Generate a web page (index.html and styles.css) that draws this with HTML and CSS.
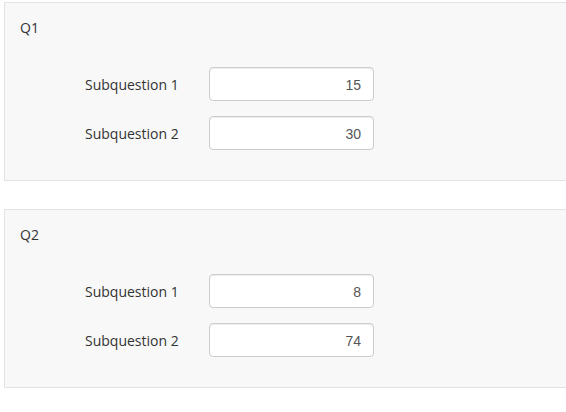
FILE: index.html
```html
<!DOCTYPE html>
<html>
<head>
<meta charset="utf-8">
<link rel="stylesheet" href="styles.css">
</head>
<body>
<div class="page">
  <section class="panel">
    <div class="title">Q1</div>
    <div class="rows">
      <div class="row"><span class="label">Subquestion 1</span><input class="field" type="text" value="15"></div>
      <div class="row"><span class="label">Subquestion 2</span><input class="field" type="text" value="30"></div>
    </div>
  </section>
  <section class="panel">
    <div class="title">Q2</div>
    <div class="rows">
      <div class="row"><span class="label">Subquestion 1</span><input class="field" type="text" value="8"></div>
      <div class="row"><span class="label">Subquestion 2</span><input class="field" type="text" value="74"></div>
    </div>
  </section>
</div>
</body>
</html>
```
FILE: styles.css
```css
html, body {
  margin: 0;
  padding: 0;
  background: #ffffff;
  overflow: hidden;
}
.page {
  padding: 2px 0 0 4px;
  display: flex;
  flex-direction: column;
  gap: 28px;
  font-family: "Open Sans", sans-serif;
  font-size: 14px;
  color: #333333;
}
.panel {
  background: #f8f8f8;
  border: 1px solid #e3e3e3;
  border-right: none;
  padding: 15px 0 30px 15px;
}
.title {
  line-height: 20px;
}
.rows {
  margin: 29px 0 0 65px;
  display: flex;
  flex-direction: column;
  gap: 15px;
}
.row {
  display: flex;
  align-items: center;
}
.label {
  width: 124px;
  line-height: 20px;
  padding-top: 2px;
}
.field {
  box-sizing: border-box;
  width: 165px;
  height: 34px;
  margin: 0;
  padding: 1px 12px 0 12px;
  border: 1px solid #cccccc;
  border-radius: 4px;
  background: #ffffff;
  text-align: right;
  font-family: "Liberation Sans", Arial, sans-serif;
  font-size: 14px;
  color: #555555;
  box-shadow: inset 0 1px 1px rgba(0,0,0,0.075);
  outline: none;
}
```
